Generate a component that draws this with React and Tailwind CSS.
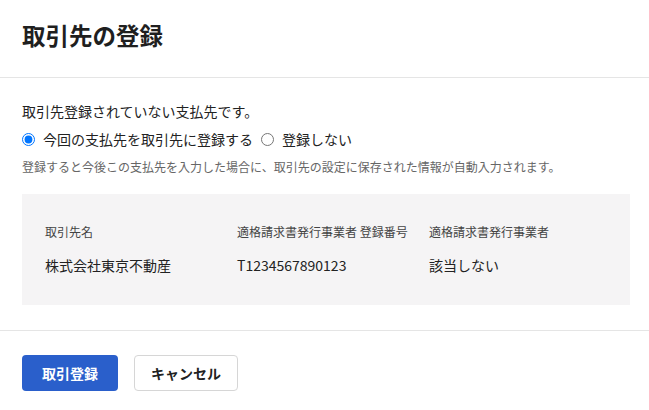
import React, { useState } from 'react'

const font = { fontFamily: '"Noto Sans CJK JP", "Noto Sans", sans-serif' }

const App = () => {
    const [registrar, setRegistrar] = useState(true)

    return (
        <div className="w-[649px] h-[410px] bg-white text-[#222]" style={font}>
            <div className="px-[22px] pt-[21px] pb-[28px] border-b border-[#e5e5e5]">
                <h1 className="text-[23.5px] leading-[28px] font-bold text-[#1f1f1f]">取引先の登録</h1>
            </div>

            <div className="px-[22px] pt-[23px] pb-[25px] border-b border-[#e5e5e5]">
                <p className="text-[14px] leading-[20px]">取引先登録されていない支払先です。</p>
                <div className="flex items-center mt-[8px] text-[14px] leading-[20px]">
                    <label className="flex items-center gap-[8px]">
                        <input
                            type="radio"
                            name="reg"
                            className="m-0 w-[13px] h-[13px]"
                            checked={registrar}
                            onChange={() => setRegistrar(true)}
                        />
                        今回の支払先を取引先に登録する
                    </label>
                    <label className="flex items-center gap-[8px] ml-[8px]">
                        <input
                            type="radio"
                            name="reg"
                            className="m-0 w-[13px] h-[13px]"
                            checked={!registrar}
                            onChange={() => setRegistrar(false)}
                        />
                        登録しない
                    </label>
                </div>
                <p className="mt-[9px] text-[12px] leading-[18px] text-[#666]">
                    登録すると今後この支払先を入力した場合に、取引先の設定に保存された情報が自動入力されます。
                </p>

                <div className="mt-[18px] w-[608px] bg-[#f5f4f5] pl-[23px] pt-[29px] pb-[30px]">
                    <div className="grid grid-cols-[192px_192px_192px] text-[12px] leading-[18px] text-[#444]">
                        <span>取引先名</span>
                        <span>適格請求書発行事業者 登録番号</span>
                        <span>適格請求書発行事業者</span>
                    </div>
                    <div className="grid grid-cols-[192px_192px_192px] mt-[14px] text-[14px] leading-[20px]">
                        <span>株式会社東京不動産</span>
                        <span>T1234567890123</span>
                        <span>該当しない</span>
                    </div>
                </div>
            </div>

            <div className="px-[22px] pt-[24px] flex gap-[16px]">
                <button className="w-[96px] h-[36px] rounded-[4px] bg-[#2a5fcb] text-white text-[14px] font-bold">
                    取引登録
                </button>
                <button className="w-[104px] h-[36px] rounded-[4px] border border-[#d6d6d6] bg-white text-[#222] text-[14px] font-bold">
                    キャンセル
                </button>
            </div>
        </div>
    )
}

export default App
